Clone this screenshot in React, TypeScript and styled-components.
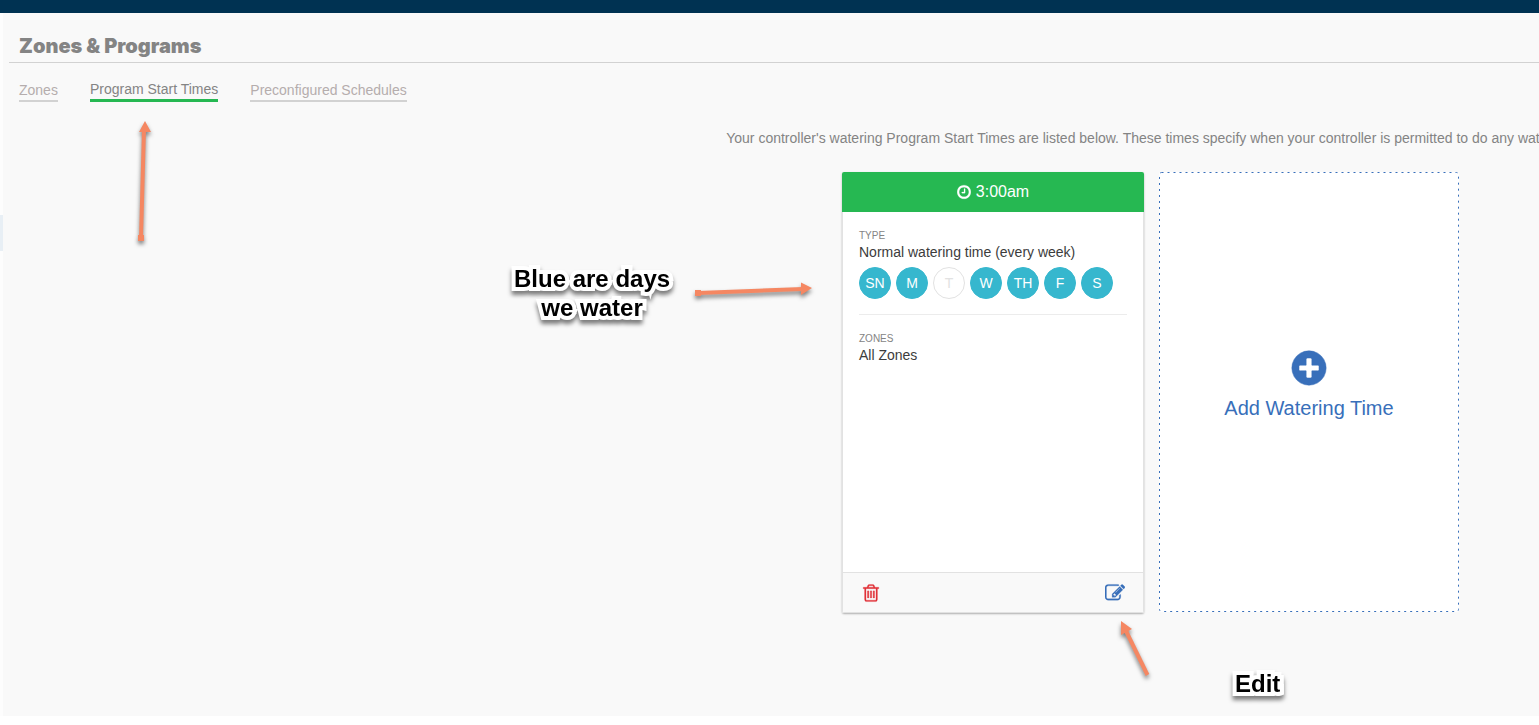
import React from "react";
import styled, { createGlobalStyle, css } from "styled-components";

const colors = {
  navy: "#003252",
  page: "#f9f9f9",
  green: "#26b852",
  teal: "#36b7ce",
  blue: "#386fba",
  red: "#e2333a",
  grey: "#848484",
  ink: "#3c3c3c",
  line: "#d2d2d2",
  arrow: "#f58762",
};

const GlobalStyle = createGlobalStyle`
  *, *::before, *::after { box-sizing: border-box; }
  body {
    margin: 0;
    background: #fff;
    color: ${colors.grey};
    font: 14px/16px "Liberation Sans", Arial, sans-serif;
  }
  h1, p, ul, dl, dd { margin: 0; padding: 0; }
  ul { list-style: none; }
  button { font-family: inherit; cursor: pointer; }
`;

const Page = styled.div`
  display: flex;
  flex-direction: column;
  min-height: 100vh;
  padding-bottom: 9px;
  overflow: hidden;
`;

const TopBar = styled.div`
  height: 13px;
  flex: none;
  background: ${colors.navy};
`;

const Body = styled.div`
  display: flex;
  flex: 1;
`;

const SideRail = styled.div`
  flex: none;
  width: 3px;
  padding-top: 202px;
  background: #fdfdfd;
`;

const RailItem = styled.div`
  height: 36px;
  background: #e8eff5;
`;

const Main = styled.main`
  flex: 1;
  min-width: 0;
  padding-left: 6px;
  background: ${colors.page};
`;

/* The pane is wider than the window and runs out of view on the right. */
const Pane = styled.div`
  width: calc(100% + 753px);
`;

const PageHeader = styled.header`
  padding: 22px 10px 4px;
  border-bottom: 1px solid ${colors.line};
`;

const Title = styled.h1`
  font: 900 20px/23px Inter, "Arial Black", sans-serif;
  color: ${colors.grey};
`;

const Tabs = styled.ul`
  display: flex;
  align-items: flex-end;
  gap: 32px;
  padding: 18px 10px 0;
`;

const TabItem = styled.li`
  position: relative;
`;

const TabLink = styled.a<{ $active?: boolean }>`
  display: block;
  padding-bottom: 2px;
  color: #b5adad;
  text-decoration: none;
  border-bottom: 2px solid ${colors.line};
  ${(p) =>
    p.$active &&
    css`
      color: ${colors.grey};
      border-bottom: 3px solid ${colors.green};
    `}
`;

const Intro = styled.p`
  margin: 28px 0 26px;
  text-align: center;
`;

const CardRow = styled.div`
  display: flex;
  justify-content: center;
`;

const Cards = styled.div`
  position: relative;
  display: flex;
  align-items: flex-start;
  gap: 15px;
`;

const Card = styled.article`
  display: flex;
  flex-direction: column;
  width: 302px;
  min-height: 441px;
  border-radius: 2px;
  background: #fff;
  box-shadow: 0 1px 2px rgba(0, 0, 0, 0.3);
  overflow: hidden;
`;

const CardHeader = styled.header`
  display: flex;
  align-items: center;
  justify-content: center;
  gap: 5px;
  height: 40px;
  background: ${colors.green};
  color: #fff;
  font-size: 16px;
  line-height: 18px;
`;

const CardBody = styled.dl`
  flex: 1;
  padding: 0 16px;
  border: solid #e2e2e2;
  border-width: 0 1px;
`;

const Field = styled.div`
  padding: 17px 0 15px;
  & + & {
    border-top: 1px solid #ececec;
  }
`;

const FieldLabel = styled.dt`
  font-size: 10px;
  line-height: 13px;
  margin-bottom: 2px;
  text-transform: uppercase;
`;

const FieldValue = styled.dd`
  color: ${colors.ink};
`;

const Days = styled.ul`
  display: flex;
  gap: 5px;
  margin-top: 7px;
`;

const Day = styled.li<{ $on: boolean }>`
  display: grid;
  place-items: center;
  width: 32px;
  height: 32px;
  border-radius: 50%;
  border: 1px solid ${(p) => (p.$on ? colors.teal : "#e2e2e2")};
  background: ${(p) => (p.$on ? colors.teal : "#fff")};
  color: ${(p) => (p.$on ? "#fff" : "#e2e2e2")};
`;

const CardFooter = styled.footer`
  display: flex;
  align-items: center;
  justify-content: space-between;
  height: 41px;
  padding: 0 18px;
  border: 1px solid #e2e2e2;
  background: ${colors.page};
`;

const IconButton = styled.button<{ $color: string }>`
  display: block;
  padding: 0;
  border: 0;
  background: none;
  color: ${(p) => p.$color};
`;

const AddCard = styled.button`
  display: flex;
  flex-direction: column;
  align-items: center;
  justify-content: center;
  gap: 8px;
  width: 300px;
  min-height: 440px;
  padding: 0 0 16px;
  border: 0;
  border-radius: 2px;
  background: #fff;
  color: ${colors.blue};
  font-size: 20px;
  line-height: 24px;
  position: relative;
`;

const DashFrame = styled.svg`
  position: absolute;
  inset: 0;
  width: 100%;
  height: 100%;
  fill: none;
  stroke: ${colors.blue};
`;

const Glyph = styled.svg`
  display: block;
  fill: currentColor;
`;

const Arrow = styled.svg<{ $x: number; $y: number }>`
  position: absolute;
  left: ${(p) => p.$x}px;
  top: ${(p) => p.$y}px;
  overflow: visible;
  pointer-events: none;
  fill: ${colors.arrow};
  stroke: ${colors.arrow};
  filter: drop-shadow(0 3px 2px rgba(0, 0, 0, 0.5));
`;

const Note = styled.p<{ $x: number; $y: number }>`
  position: absolute;
  left: ${(p) => p.$x}px;
  top: ${(p) => p.$y}px;
  color: #000;
  font-size: 24px;
  font-weight: 700;
  line-height: 29px;
  text-align: center;
  white-space: nowrap;
  -webkit-text-stroke: 8px #fff;
  paint-order: stroke fill;
  stroke-linejoin: round;
  filter: drop-shadow(0 4px 2px rgba(0, 0, 0, 0.5));
`;

const icons = {
  clock:
    "M1024 544v448q0 14-9 23t-23 9h-320q-14 0-23-9t-9-23v-64q0-14 9-23t23-9h224v-352q0-14 9-23t23-9h64q14 0 23 9t9 23zm416 352q0-148-73-273t-198-198-273-73-273 73-198 198-73 273 73 273 198 198 273 73 273-73 198-198 73-273zm224 0q0 209-103 385.5t-279.5 279.5-385.5 103-385.5-103-279.5-279.5-103-385.5 103-385.5 279.5-279.5 385.5-103 385.5 103 279.5 279.5 103 385.5z",
  plus:
    "M1344 960v-128q0-26-19-45t-45-19h-256v-256q0-26-19-45t-45-19h-128q-26 0-45 19t-19 45v256h-256q-26 0-45 19t-19 45v128q0 26 19 45t45 19h256v256q0 26 19 45t45 19h128q26 0 45-19t19-45v-256h256q26 0 45-19t19-45zm320-64q0 209-103 385.5t-279.5 279.5-385.5 103-385.5-103-279.5-279.5-103-385.5 103-385.5 279.5-279.5 385.5-103 385.5 103 279.5 279.5 103 385.5z",
  trash:
    "M704 736v576q0 14-9 23t-23 9h-64q-14 0-23-9t-9-23v-576q0-14 9-23t23-9h64q14 0 23 9t9 23zm256 0v576q0 14-9 23t-23 9h-64q-14 0-23-9t-9-23v-576q0-14 9-23t23-9h64q14 0 23 9t9 23zm256 0v576q0 14-9 23t-23 9h-64q-14 0-23-9t-9-23v-576q0-14 9-23t23-9h64q14 0 23 9t9 23zm128 724v-948h-896v948q0 22 7 40.5t14.5 27 10.5 8.5h832q3 0 10.5-8.5t14.5-27 7-40.5zm-672-1076h448l-48-117q-7-9-17-11h-317q-10 2-17 11zm928 32v64q0 14-9 23t-23 9h-96v948q0 83-47 143.5t-113 60.5h-832q-66 0-113-58.5t-47-141.5v-952h-96q-14 0-23-9t-9-23v-64q0-14 9-23t23-9h309l70-167q15-37 54-63t79-26h320q40 0 79 26t54 63l70 167h309q14 0 23 9t9 23z",
  edit:
    "M888 1184l116-116-152-152-116 116v56h96v96h56zm440-720q-16-16-33 1l-350 350q-17 17-1 33t33-1l350-350q17-17 1-33zm80 594v190q0 119-84.5 203.5t-203.5 84.5h-832q-119 0-203.5-84.5t-84.5-203.5v-832q0-119 84.5-203.5t203.5-84.5h832q63 0 117 25 15 7 18 23 3 17-9 29l-49 49q-14 14-32 8-23-6-45-6h-832q-66 0-113 47t-47 113v832q0 66 47 113t113 47h832q66 0 113-47t47-113v-126q0-13 9-22l64-64q15-15 35-7t20 29zm-96-738l288 288-672 672h-288v-288zm444 132l-92 92-288-288 92-92q28-28 68-28t68 28l152 152q28 28 28 68t-28 68z",
};

function Icon({ name, size, tight }: { name: keyof typeof icons; size: number; tight?: boolean }) {
  return (
    <Glyph
      width={tight ? size - 2 : size}
      height={size}
      viewBox={tight ? "128 0 1536 1792" : "0 0 1792 1792"}
      aria-hidden="true"
    >
      <path d={icons[name]} stroke="currentColor" strokeWidth="24" />
    </Glyph>
  );
}

const week = [
  { label: "SN", on: true },
  { label: "M", on: true },
  { label: "T", on: false },
  { label: "W", on: true },
  { label: "TH", on: true },
  { label: "F", on: true },
  { label: "S", on: true },
];

export default function App() {
  return (
    <Page>
      <GlobalStyle />
      <TopBar />
      <Body>
        <SideRail>
          <RailItem />
        </SideRail>
        <Main>
          <Pane>
            <PageHeader>
              <Title>Zones &amp; Programs</Title>
            </PageHeader>
            <nav>
              <Tabs>
                <TabItem>
                  <TabLink href="#zones">Zones</TabLink>
                </TabItem>
                <TabItem>
                  <TabLink href="#start-times" aria-current="page" $active>
                    Program Start Times
                  </TabLink>
                  <Arrow $x={48} $y={40} width="13" height="121" aria-hidden="true">
                    <path d="M3 117 6 8" strokeWidth="4" />
                    <path d="M7 0 13 11H1zM0 114h6v6H0z" stroke="none" />
                  </Arrow>
                </TabItem>
                <TabItem>
                  <TabLink href="#schedules">Preconfigured Schedules</TabLink>
                </TabItem>
              </Tabs>
            </nav>
            <Intro>
              Your controller's watering Program Start Times are listed below. These times specify when your
              controller is permitted to do any watering.
            </Intro>
            <CardRow>
              <Cards>
                <Card>
                  <CardHeader>
                    <Icon name="clock" size={16} tight />
                    <span>3:00am</span>
                  </CardHeader>
                  <CardBody>
                    <Field>
                      <FieldLabel>Type</FieldLabel>
                      <FieldValue>
                        Normal watering time (every week)
                        <Days>
                          {week.map((d) => (
                            <Day key={d.label} $on={d.on}>
                              {d.label}
                            </Day>
                          ))}
                        </Days>
                      </FieldValue>
                    </Field>
                    <Field>
                      <FieldLabel>Zones</FieldLabel>
                      <FieldValue>All Zones</FieldValue>
                    </Field>
                  </CardBody>
                  <CardFooter>
                    <IconButton type="button" aria-label="Delete" $color={colors.red}>
                      <Icon name="trash" size={20} />
                    </IconButton>
                    <IconButton type="button" aria-label="Edit" $color={colors.blue}>
                      <Icon name="edit" size={20} />
                    </IconButton>
                  </CardFooter>
                </Card>
                <AddCard type="button">
                  <DashFrame viewBox="0 0 300 440" preserveAspectRatio="none" aria-hidden="true">
                    <rect x="0.5" y="0.5" width="299" height="439" rx="2" strokeDasharray="2 4" />
                  </DashFrame>
                  <Icon name="plus" size={40} />
                  <span>Add Watering Time</span>
                </AddCard>

                <Note $x={-328} $y={92}>
                  Blue are days
                  <br />
                  we water
                </Note>
                <Arrow $x={-147} $y={110} width="118" height="14" aria-hidden="true">
                  <path d="M3 11 108 7" strokeWidth="4" />
                  <path d="M117 6 106 0.5V13zM0 8h6v6H0z" stroke="none" />
                </Arrow>
                <Arrow $x={279} $y={449} width="28" height="56" aria-hidden="true">
                  <path d="M5 10 26.500 54" strokeWidth="4" />
                  <path d="M0 0 11 8 0 14z" stroke="none" />
                </Arrow>
                <Note $x={393} $y={497}>
                  Edit
                </Note>
              </Cards>
            </CardRow>
          </Pane>
        </Main>
      </Body>
    </Page>
  );
}
